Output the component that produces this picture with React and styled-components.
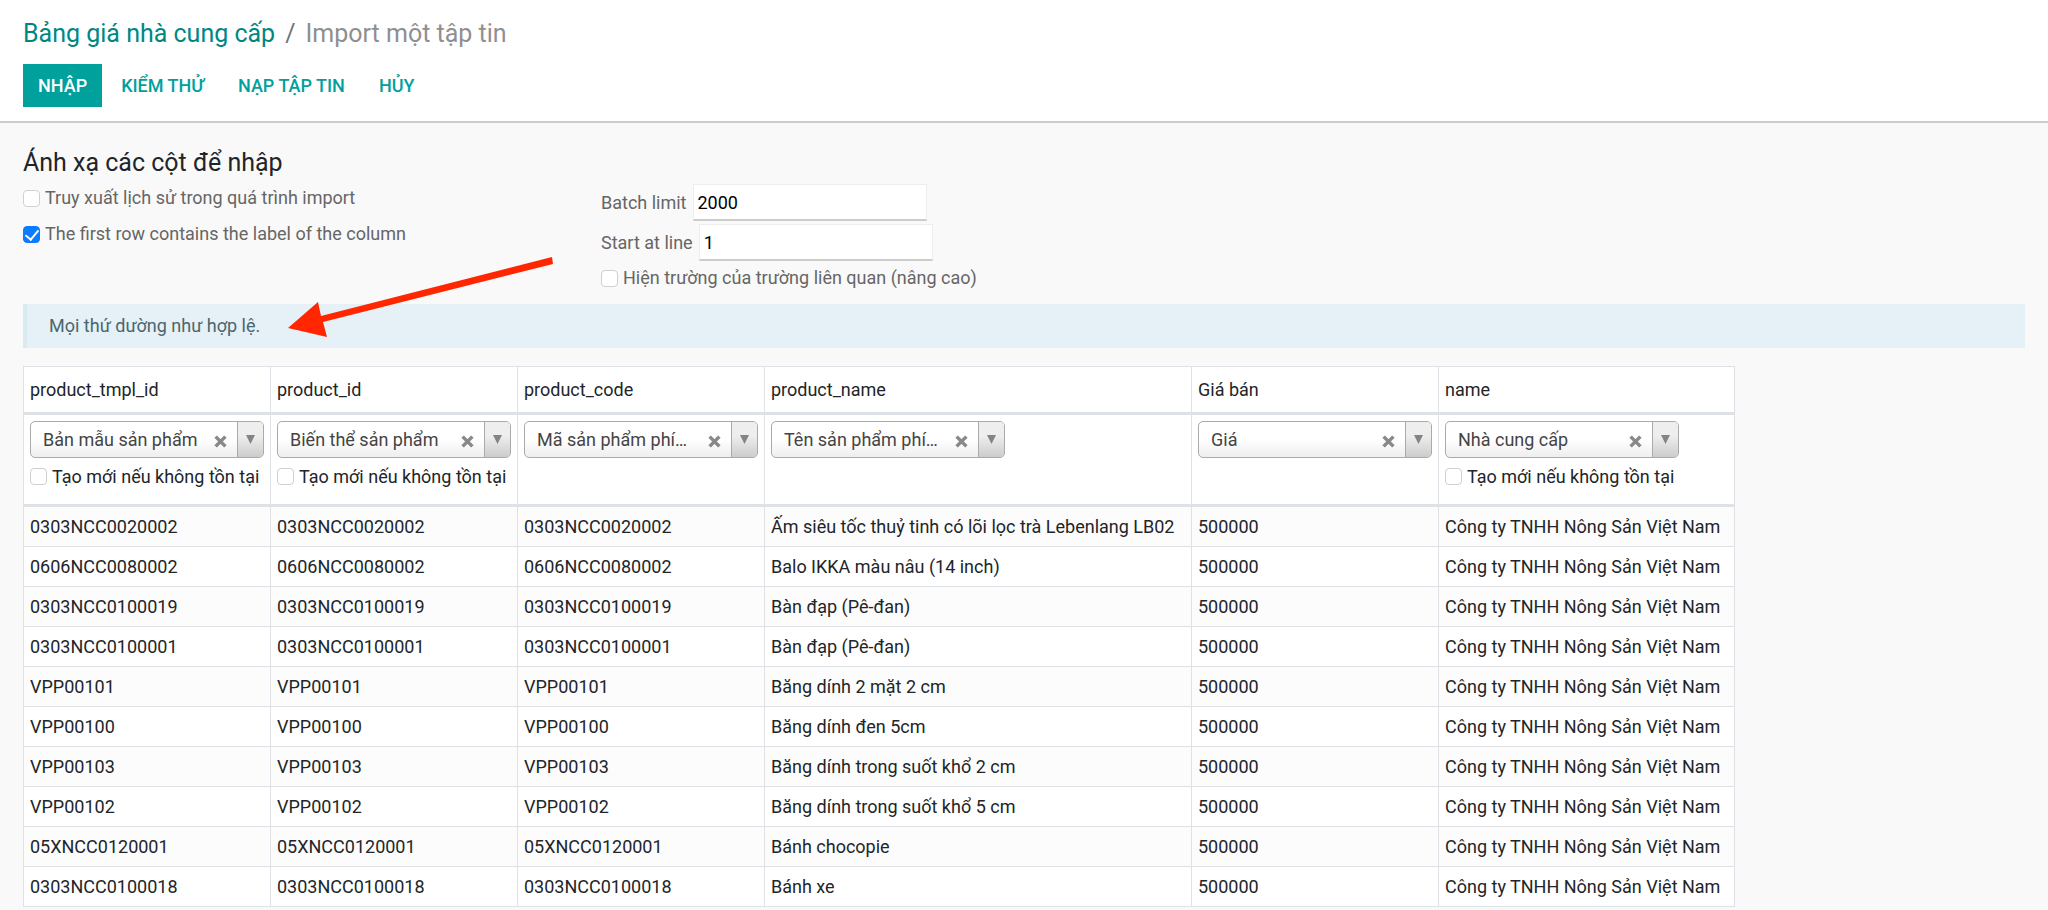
import { useState } from "react";
import styled, { createGlobalStyle } from "styled-components";

const GlobalStyle = createGlobalStyle`
  * {
    box-sizing: border-box;
  }

  body {
    margin: 0;
    background-color: #f9f9f9;
    color: #212529;
    font-family: Roboto, "Noto Sans", sans-serif;
    font-size: 18px;
    line-height: 28px;
  }

  button, input, select {
    font-family: inherit;
    font-size: inherit;
  }
`;

const ControlPanel = styled.header`
  display: flex;
  flex-direction: column;
  align-items: flex-start;
  gap: 12px;
  padding: 16px 23px 14px;
  background-color: #ffffff;
  border-bottom: 2px solid #cccccc;
`;

const Breadcrumb = styled.nav`
  display: flex;
  gap: 10px;
  font-size: 25px;
  line-height: 36px;
  color: #6c757d;
`;

const BreadcrumbLink = styled.a`
  color: #008784;
  text-decoration: none;
`;

const BreadcrumbCurrent = styled.span`
  color: #8f8f8f;
`;

const ButtonBar = styled.div`
  display: flex;
  gap: 4px;
`;

const Button = styled.button`
  height: 43px;
  padding: 0 15px;
  border: none;
  background-color: ${({ $primary }) => ($primary ? "#00a09d" : "transparent")};
  color: ${({ $primary }) => ($primary ? "#ffffff" : "#00a09d")};
  font-weight: 500;
  text-transform: uppercase;
  cursor: pointer;
`;

const Content = styled.main`
  position: relative;
  padding: 22px 23px 4px;
`;

const Heading = styled.h2`
  margin: 0;
  font-size: 25px;
  font-weight: 400;
  line-height: 36px;
`;

const Options = styled.div`
  display: grid;
  grid-template-columns: 578px 1fr;
  margin-bottom: 12px;
  color: #666666;
`;

const OptionColumn = styled.div`
  display: flex;
  flex-direction: column;
  align-items: flex-start;
  gap: ${({ $gap }) => $gap}px;
  padding-top: 3px;
`;

const Field = styled.div`
  display: flex;
  align-items: center;
  gap: 6px;
`;

const TextInput = styled.input`
  width: 234px;
  height: 37px;
  padding: 0 4px;
  border: 1px solid #eeeeee;
  border-bottom: 2px solid #cccccc;
  background-color: #ffffff;
  color: #000000;
`;

const CheckLabel = styled.label`
  display: flex;
  align-items: center;
  gap: 5px;
  white-space: nowrap;
`;

const Checkbox = styled.input`
  appearance: none;
  display: grid;
  place-items: center;
  width: 17px;
  height: 17px;
  margin: 0;
  border: 1px solid #d0d0d0;
  border-radius: 4px;
  background-color: #ffffff;

  &:checked {
    border-color: #0a7cff;
    background-color: #0a7cff;
  }

  &:checked::before {
    content: "";
    width: 6px;
    height: 11px;
    margin-bottom: 3px;
    border: solid #ffffff;
    border-width: 0 2px 2px 0;
    transform: rotate(40deg);
  }
`;

const Alert = styled.div`
  margin-bottom: 18px;
  padding: 8px 22px;
  border-left: 4px solid #d9eaf1;
  background-color: #e5f1f6;
  color: #4a666f;
`;

const Arrow = styled.svg`
  position: absolute;
  left: 286px;
  top: 132px;
  pointer-events: none;
`;

const Table = styled.table`
  border-collapse: collapse;
  background-color: #ffffff;
  line-height: 27px;
  white-space: nowrap;

  th,
  td {
    padding: 6px;
    border: 1px solid #dee2e6;
    font-weight: 400;
    text-align: left;
    vertical-align: top;
  }

  thead tr {
    border-bottom: 3px solid #dee2e6;
  }

  thead th {
    height: 47px;
    padding-top: 9px;
  }

  thead td {
    height: 92px;
  }

  tbody tr:nth-child(odd) {
    background-color: #fcfcfc;
  }
`;

const ColumnTitle = styled.th`
  min-width: ${({ $width }) => $width}px;
`;

const SelectBox = styled.div`
  display: grid;
  grid-template-columns: 1fr 34px 26px;
  width: 234px;
  height: 37px;
  margin-bottom: 5px;
  overflow: hidden;
  border: 1px solid #aaaaaa;
  border-radius: 5px;
  background: linear-gradient(#ffffff 50%, #eeeeee);
`;

const Select = styled.select`
  grid-area: 1 / 1 / 2 / -1;
  appearance: none;
  padding: 0 52px 0 12px;
  border: none;
  background: transparent;
  color: #444444;
`;

const ClearButton = styled.button`
  grid-area: 1 / 2;
  padding: 4px 0 0;
  border: none;
  background: none;
  line-height: 0;
  cursor: pointer;
`;

const SelectArrow = styled.span`
  grid-area: 1 / 3;
  display: flex;
  align-items: center;
  justify-content: center;
  border-left: 1px solid #aaaaaa;
  background: linear-gradient(#eeeeee 40%, #cccccc);
  pointer-events: none;
`;

const columns = [
  { title: "product_tmpl_id", field: "Bản mẫu sản phẩm", create: true, width: 247 },
  { title: "product_id", field: "Biến thể sản phẩm", create: true, width: 247 },
  { title: "product_code", field: "Mã sản phẩm phí…", width: 247 },
  { title: "product_name", field: "Tên sản phẩm phí…", width: 427 },
  { title: "Giá bán", field: "Giá", width: 247 },
  { title: "name", field: "Nhà cung cấp", create: true, width: 296 },
];

const products = [
  ["0303NCC0020002", "Ấm siêu tốc thuỷ tinh có lõi lọc trà Lebenlang LB02"],
  ["0606NCC0080002", "Balo IKKA màu nâu (14 inch)"],
  ["0303NCC0100019", "Bàn đạp (Pê-đan)"],
  ["0303NCC0100001", "Bàn đạp (Pê-đan)"],
  ["VPP00101", "Băng dính 2 mặt 2 cm"],
  ["VPP00100", "Băng dính đen 5cm"],
  ["VPP00103", "Băng dính trong suốt khổ 2 cm"],
  ["VPP00102", "Băng dính trong suốt khổ 5 cm"],
  ["05XNCC0120001", "Bánh chocopie"],
  ["0303NCC0100018", "Bánh xe"],
];

const CheckOption = ({ label, checked = false }) => {
  const [value, setValue] = useState(checked);
  return (
    <CheckLabel>
      <Checkbox
        type="checkbox"
        checked={value}
        onChange={(e) => setValue(e.target.checked)}
      />
      {label}
    </CheckLabel>
  );
};

const FieldSelect = ({ column }) => {
  const [value, setValue] = useState(column.field);
  return (
    <SelectBox>
      <Select
        aria-label={column.title}
        value={value}
        onChange={(e) => setValue(e.target.value)}
      >
        <option value="" />
        <option value={column.field}>{column.field}</option>
      </Select>
      <ClearButton type="button" aria-label="Clear" onClick={() => setValue("")}>
        <svg width="13" height="13" viewBox="0 0 12 12">
          <path d="M1.5 1.5L10.5 10.5M10.5 1.5L1.5 10.5" stroke="#888888" strokeWidth="3.2" />
        </svg>
      </ClearButton>
      <SelectArrow>
        <svg width="9" height="9" viewBox="0 0 9 9">
          <path d="M0 0H9L4.5 9Z" fill="#848484" />
        </svg>
      </SelectArrow>
    </SelectBox>
  );
};

const App = () => {
  return (
    <>
      <GlobalStyle />
      <ControlPanel>
        <Breadcrumb>
          <BreadcrumbLink href="#">Bảng giá nhà cung cấp</BreadcrumbLink>
          <span>/</span>
          <BreadcrumbCurrent>Import một tập tin</BreadcrumbCurrent>
        </Breadcrumb>
        <ButtonBar>
          <Button $primary>Nhập</Button>
          <Button>Kiểm thử</Button>
          <Button>Nạp tập tin</Button>
          <Button>Hủy</Button>
        </ButtonBar>
      </ControlPanel>

      <Content>
        <Heading>Ánh xạ các cột để nhập</Heading>
        <Options>
          <OptionColumn $gap={8}>
            <CheckOption label="Truy xuất lịch sử trong quá trình import" />
            <CheckOption label="The first row contains the label of the column" checked />
          </OptionColumn>
          <OptionColumn $gap={3}>
            <Field>
              <label htmlFor="batch-limit">Batch limit</label>
              <TextInput id="batch-limit" defaultValue="2000" />
            </Field>
            <Field>
              <label htmlFor="start-line">Start at line</label>
              <TextInput id="start-line" defaultValue="1" />
            </Field>
            <CheckOption label="Hiện trường của trường liên quan (nâng cao)" />
          </OptionColumn>
        </Options>

        <Alert>Mọi thứ dường như hợp lệ.</Alert>
        <Arrow width="270" height="84" viewBox="286 255 270 84">
          <path
            d="M288 328L318 302L321 316L552 257L553 264L323 322L327 337Z"
            fill="#ff2600"
          />
        </Arrow>

        <Table>
          <thead>
            <tr>
              {columns.map((column) => (
                <ColumnTitle key={column.title} $width={column.width}>
                  {column.title}
                </ColumnTitle>
              ))}
            </tr>
            <tr>
              {columns.map((column) => (
                <td key={column.title}>
                  <FieldSelect column={column} />
                  {column.create && <CheckOption label="Tạo mới nếu không tồn tại" />}
                </td>
              ))}
            </tr>
          </thead>
          <tbody>
            {products.map(([code, name]) => (
              <tr key={code}>
                <td>{code}</td>
                <td>{code}</td>
                <td>{code}</td>
                <td>{name}</td>
                <td>500000</td>
                <td>Công ty TNHH Nông Sản Việt Nam</td>
              </tr>
            ))}
          </tbody>
        </Table>
      </Content>
    </>
  );
};

export default App;
